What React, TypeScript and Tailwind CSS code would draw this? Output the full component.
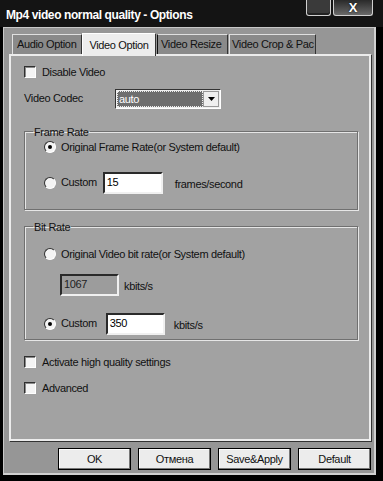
import React from 'react'

const font = { fontFamily: '"Liberation Sans", Arial, sans-serif' }

function Check({ label }: { label: string }) {
  return (
    <div className="flex items-center gap-[6px]">
      <span className="w-[12px] h-[12px] bg-[#f4f4f4] border-t border-l border-t-[#303030] border-l-[#303030] border-b border-r border-b-white border-r-white shadow-[inset_1px_1px_0_#8a8a8a]" />
      <span className="text-[#111]">{label}</span>
    </div>
  )
}

function Radio({ checked, label }: { checked?: boolean; label: string }) {
  return (
    <div className="flex items-center gap-[5px]">
      <span className="w-[12px] h-[12px] rounded-full bg-[#f4f4f4] border border-t-[#303030] border-l-[#303030] border-b-white border-r-white flex items-center justify-center">
        {checked && <span className="w-[4px] h-[4px] rounded-full bg-black" />}
      </span>
      <span className="text-[#111]">{label}</span>
    </div>
  )
}

function Field({ value, w, disabled }: { value: string; w: string; disabled?: boolean }) {
  return (
    <div
      className={
        'h-[22px] border-2 border-t-[#2a2a2a] border-l-[#2a2a2a] border-b-[#f0f0f0] border-r-[#f0f0f0] px-[2px] leading-[16px] ' +
        w +
        (disabled ? ' bg-[#9c9c9c] text-[#222]' : ' bg-white text-black')
      }
    >
      {value}
    </div>
  )
}

function Btn({ label }: { label: string }) {
  return (
    <div className="w-[73px] h-[22px] bg-[#ececec] border border-black shadow-[inset_-1px_-1px_0_#777,inset_1px_1px_0_#fff] flex items-center justify-center text-[#111]">
      {label}
    </div>
  )
}

export default function App() {
  return (
    <div className="w-[383px] h-[481px] bg-black flex flex-col text-[11px] tracking-[-0.35px] overflow-hidden" style={font}>
      {/* title bar */}
      <div className="h-[27px] flex items-start justify-between bg-[#141414] pl-[6px] pr-[10px]">
        <div className="pt-[6px] text-white font-bold text-[12px] tracking-[-0.4px]">
          Mp4 video normal quality - Options
        </div>
        <div className="flex gap-[2px]">
          <div className="w-[25px] h-[16px] bg-[#3a3a3a] border border-t-0 border-[#d0d0d0] rounded-b-[3px] shadow-[inset_0_-2px_0_#222]" />
          <div className="w-[40px] h-[16px] bg-gradient-to-b from-[#2a2a2a] to-[#6a6a6a] border border-t-0 border-[#d0d0d0] rounded-b-[3px] flex items-center justify-center text-white font-black text-[13px] leading-none tracking-normal [text-shadow:0_0_2px_#000]">
            X
          </div>
        </div>
      </div>

      {/* body */}
      <div className="flex-1 ml-[3px] mr-[7px] mb-[6px] bg-[#969696] border-l border-t border-[#c8c8c8] border-r-2 border-b-2 border-r-[#d0d0d0] border-b-[#d0d0d0] flex flex-col pl-[5px] pr-[2px] pt-[4px]">
        {/* tabs */}
        <div className="flex items-end h-[22px] pl-[3px] text-[#111] whitespace-nowrap relative z-10">
          <div className="h-[20px] w-[70px] shrink-0 px-[4px] bg-[#8a8a8a] border border-b-0 border-t-[#e0e0e0] border-l-[#e0e0e0] border-r-[#333] flex items-center">Audio Option</div>
          <div className="h-[23px] w-[74px] shrink-0 mb-[-2px] justify-center bg-[#ededed] border border-b-0 border-t-white border-l-white border-r-[#333] flex items-center">Video Option</div>
          <div className="h-[20px] w-[71px] shrink-0 ml-[1px] px-[3px] bg-[#8a8a8a] border border-b-0 border-t-[#e0e0e0] border-r-[#333] flex items-center">Video Resize</div>
          <div className="h-[20px] w-[87px] shrink-0 ml-[1px] px-[2px] bg-[#8a8a8a] border border-b-0 border-t-[#e0e0e0] border-l-[#e0e0e0] border-r-[#333] flex items-center">Video Crop &amp; Pac</div>
        </div>

        {/* panel */}
        <div className="h-[387px] w-[362px] bg-[#a2a2a2] border-2 border-[#ececec] shadow-[1px_1px_0_#333] flex flex-col pl-[13px] pt-[8px]">
          <Check label="Disable Video" />

          <div className="flex items-center mt-[8px]">
            <span className="w-[91px] text-[#111]">Video Codec</span>
            <div className="w-[106px] h-[20px] border border-t-[#333] border-l-[#333] border-b-white border-r-white bg-[#f0f0f0] flex p-[1px]">
              <div className="flex-1 bg-[#6e6e6e] text-white leading-[14px] px-[1px] border border-dotted border-[#eee]">auto</div>
              <div className="w-[16px] bg-[#efefef] border border-[#999] flex items-center justify-center">
                <svg width="7" height="4" viewBox="0 0 7 4"><path d="M0 0h7L3.5 4z" fill="#000" /></svg>
              </div>
            </div>
          </div>

          <fieldset className="mt-[15px] w-[334px] h-[86px] border border-[#707070] shadow-[1px_1px_0_#e6e6e6,inset_1px_1px_0_#e6e6e6] pl-[19px]">
            <legend className="ml-[-11px] px-[1px] text-[#111]">Frame Rate</legend>
            <div className="mt-[-1px]">
              <Radio checked label="Original Frame Rate(or System default)" />
            </div>
            <div className="flex items-center mt-[16px]">
              <Radio label="Custom" />
              <div className="ml-[6px]"><Field value="15" w="w-[60px]" /></div>
              <span className="ml-[12px] mt-[4px] text-[#111]">frames/second</span>
            </div>
          </fieldset>

          <fieldset className="mt-[9px] w-[334px] h-[121px] border border-[#707070] shadow-[1px_1px_0_#e6e6e6,inset_1px_1px_0_#e6e6e6] pl-[19px]">
            <legend className="ml-[-11px] px-[1px] text-[#111]">Bit Rate</legend>
            <div className="mt-[11px]">
              <Radio label="Original Video bit rate(or System default)" />
            </div>
            <div className="flex items-center mt-[11px] pl-[16px]">
              <Field value="1067" w="w-[59px]" disabled />
              <span className="ml-[5px] mt-[3px] text-[#111]">kbits/s</span>
            </div>
            <div className="flex items-center mt-[17px]">
              <Radio checked label="Custom" />
              <div className="ml-[9px]"><Field value="350" w="w-[59px]" /></div>
              <span className="ml-[9px] mt-[3px] text-[#111]">kbits/s</span>
            </div>
          </fieldset>

          <div className="mt-[14px]">
            <Check label="Activate high quality settings" />
          </div>
          <div className="mt-[10px]">
            <Check label="Advanced" />
          </div>
        </div>

        {/* buttons */}
        <div className="flex justify-end gap-[7px] pr-[1px] mt-[7px]">
          <Btn label="OK" />
          <Btn label="Отмена" />
          <Btn label="Save&Apply" />
          <Btn label="Default" />
        </div>
      </div>
    </div>
  )
}
